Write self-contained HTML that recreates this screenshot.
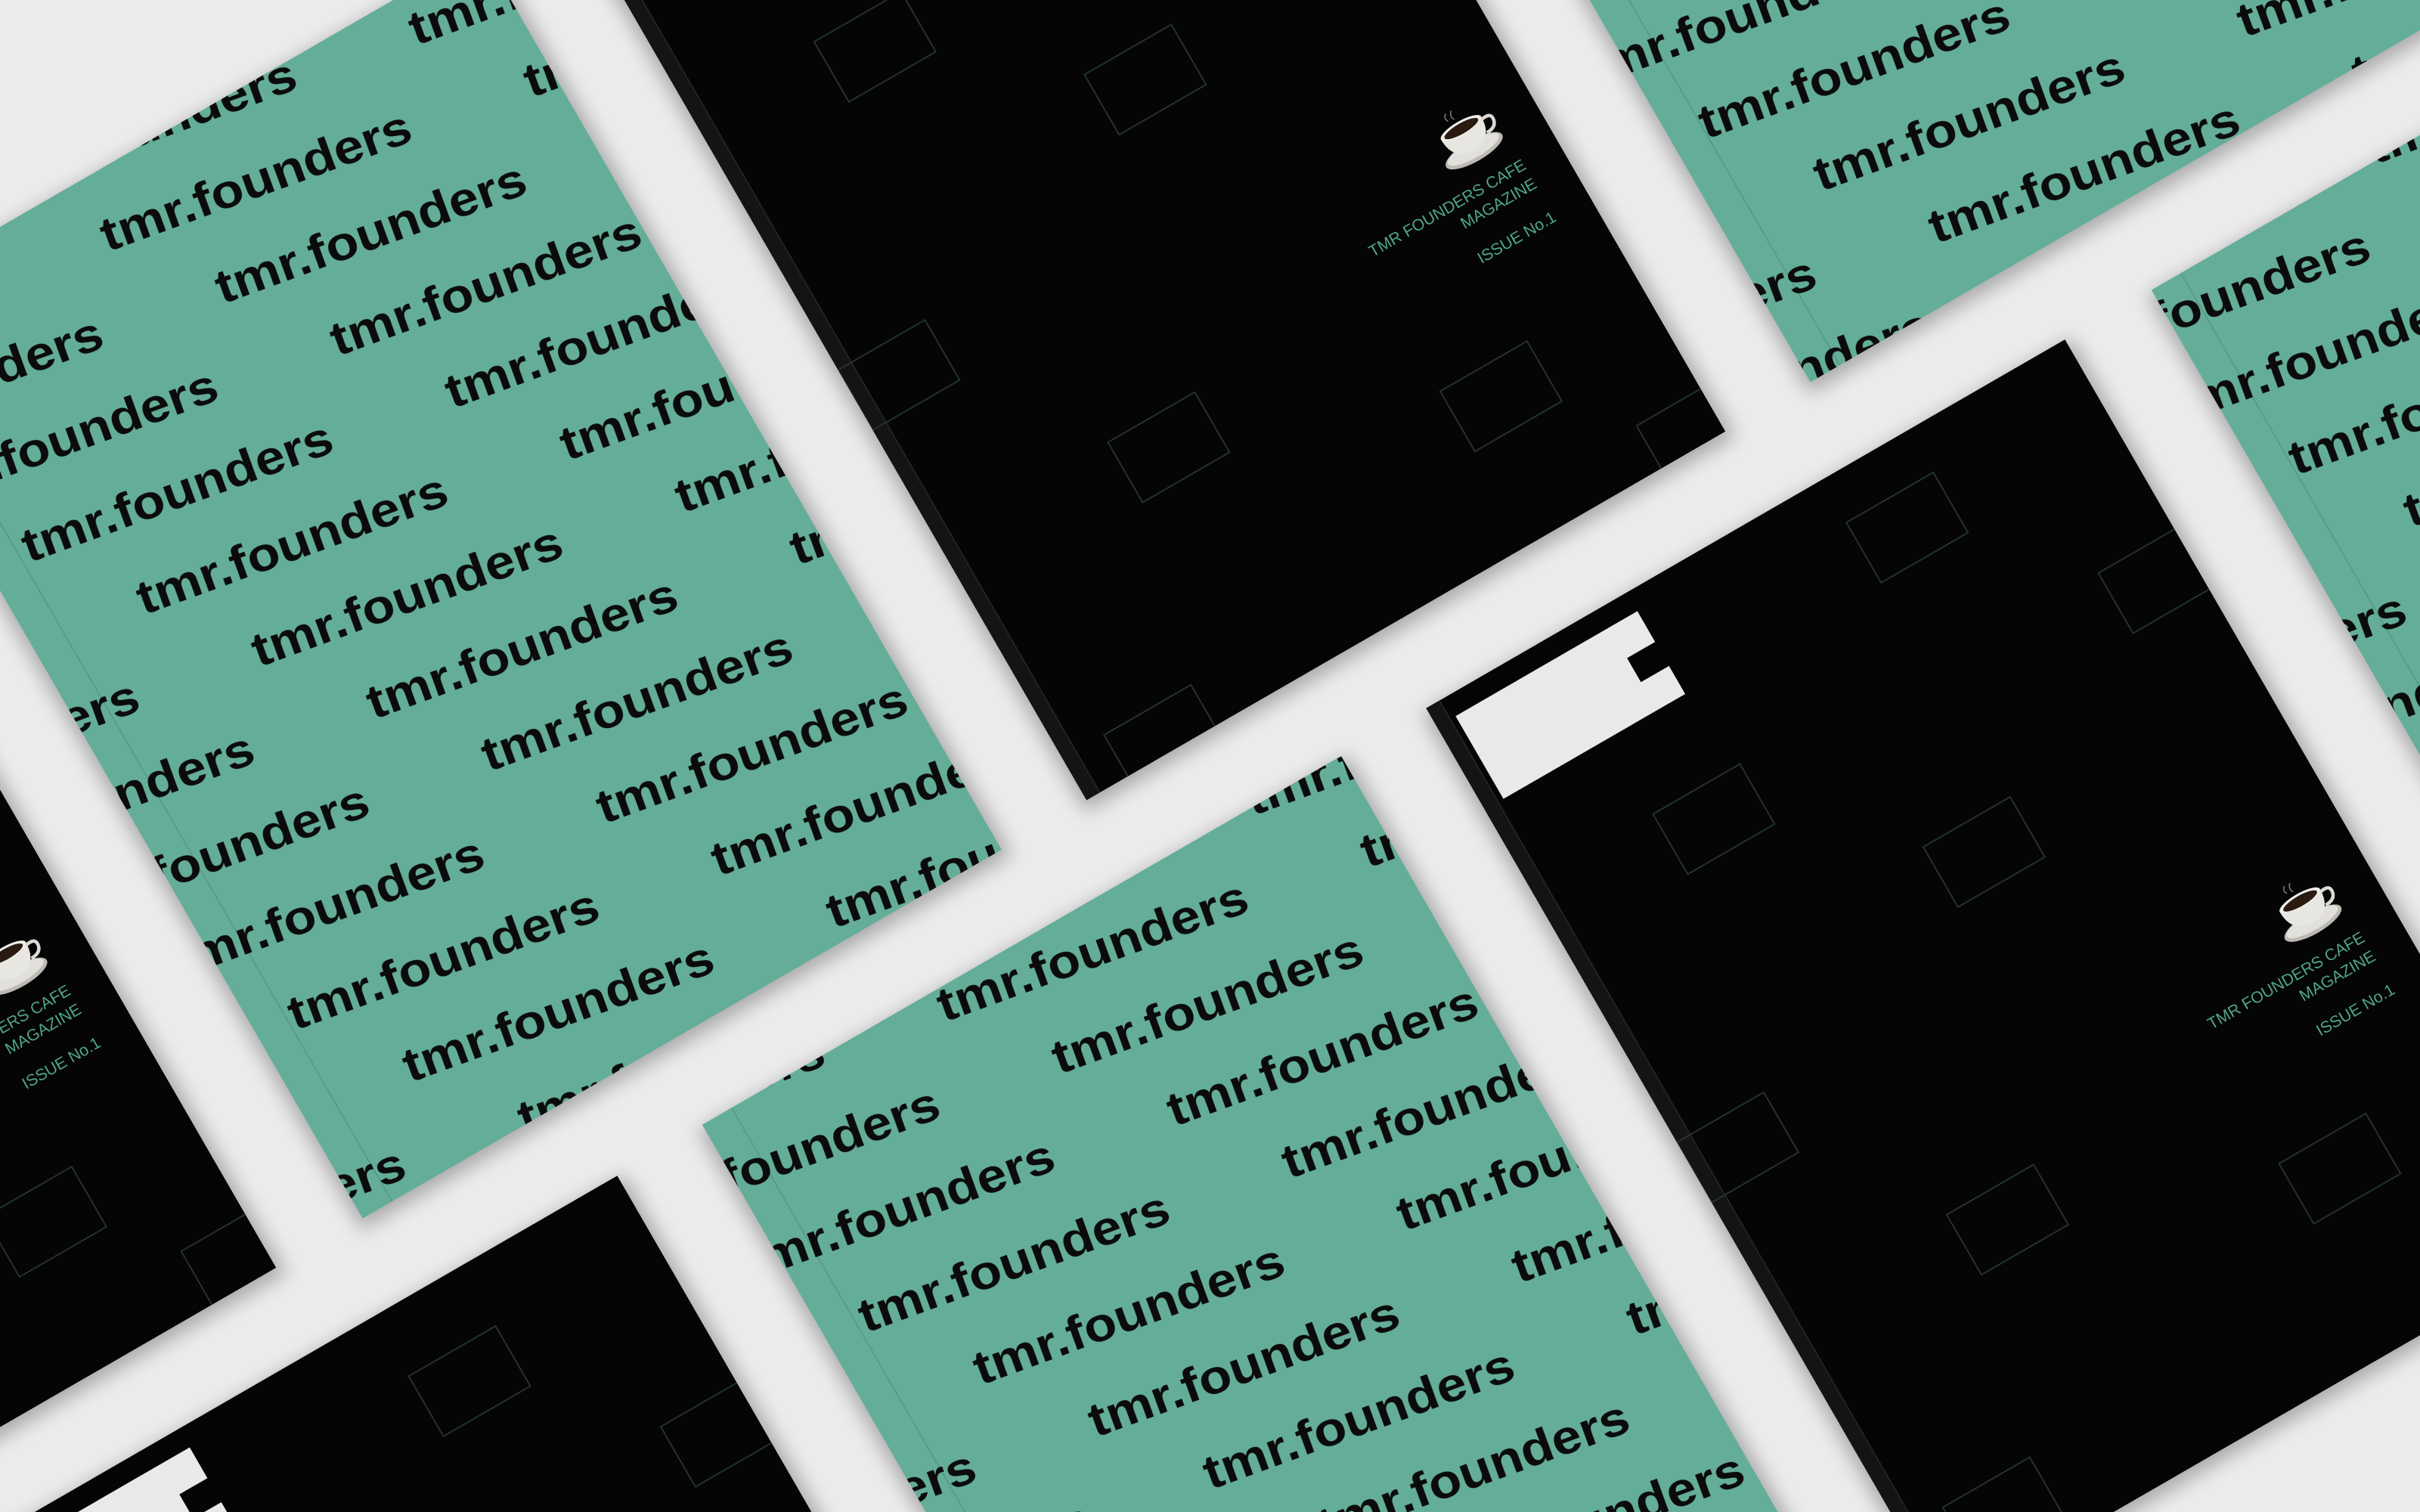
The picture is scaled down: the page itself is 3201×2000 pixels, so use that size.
<!DOCTYPE html>
<html><head><meta charset="utf-8"><style>
html,body{margin:0;padding:0;background:#ebebeb;overflow:hidden;width:3201px;height:2000px}
svg{display:block}
</style></head><body>
<svg width="3201" height="2000" viewBox="0 0 1568 980" preserveAspectRatio="none" xmlns="http://www.w3.org/2000/svg">
<defs>
<filter id="sh" x="-20%" y="-20%" width="140%" height="140%"><feGaussianBlur stdDeviation="6"/></filter>
<clipPath id="cc"><rect x="0" y="0" width="478" height="674"/></clipPath>
<g id="words" font-family="Liberation Sans, sans-serif" font-weight="bold" font-size="31" fill="#0b0b0b">
<text x="0" y="40" textLength="212" lengthAdjust="spacingAndGlyphs">tmr.founders</text>
<text x="-292" y="40" textLength="212" lengthAdjust="spacingAndGlyphs">tmr.founders</text>
<text x="58.4" y="97.3" textLength="212" lengthAdjust="spacingAndGlyphs">tmr.founders</text>
<text x="-233.6" y="97.3" textLength="212" lengthAdjust="spacingAndGlyphs">tmr.founders</text>
<text x="116.8" y="154.6" textLength="212" lengthAdjust="spacingAndGlyphs">tmr.founders</text>
<text x="-175.2" y="154.6" textLength="212" lengthAdjust="spacingAndGlyphs">tmr.founders</text>
<text x="175.2" y="211.9" textLength="212" lengthAdjust="spacingAndGlyphs">tmr.founders</text>
<text x="-116.8" y="211.9" textLength="212" lengthAdjust="spacingAndGlyphs">tmr.founders</text>
<text x="233.6" y="269.2" textLength="212" lengthAdjust="spacingAndGlyphs">tmr.founders</text>
<text x="-58.4" y="269.2" textLength="212" lengthAdjust="spacingAndGlyphs">tmr.founders</text>
</g>
<pattern id="p1" patternUnits="userSpaceOnUse" width="292" height="286.5" patternTransform="translate(170 49) rotate(10) translate(0 -40)"><use href="#words"/></pattern>
<pattern id="p2" patternUnits="userSpaceOnUse" width="292" height="286.5" patternTransform="translate(169 21) rotate(10) translate(0 -40)"><use href="#words"/></pattern>
<pattern id="p3" patternUnits="userSpaceOnUse" width="292" height="286.5" patternTransform="translate(20 504) rotate(10) translate(0 -40)"><use href="#words"/></pattern>
<pattern id="p4" patternUnits="userSpaceOnUse" width="292" height="286.5" patternTransform="translate(21 151) rotate(10) translate(0 -40)"><use href="#words"/></pattern>

<g id="sq" fill="none" stroke="#243630" stroke-width="0.9">
<rect x="93" y="160" width="65" height="45"/>
<rect x="234" y="266" width="65" height="45"/>
<rect x="0" y="352" width="65" height="45"/>
<rect x="128" y="480" width="65" height="45"/>
<rect x="331" y="559" width="65" height="45"/>
<rect x="31" y="643" width="65" height="45"/>
<rect x="430" y="642" width="65" height="45"/>
<rect x="296" y="59" width="65" height="45"/>
<rect x="421" y="169" width="65" height="45"/>
</g>
<g id="cup">
<ellipse cx="0" cy="11" rx="21" ry="7" fill="#bdbab4"/>
<ellipse cx="0" cy="10" rx="19" ry="5.5" fill="#e2e0db"/>
<path d="M-15 -6 Q-15 10 0 11 Q15 10 15 -6 Z" fill="#e8e6e1"/>
<path d="M14 -4 q8 -2 7 4 q-1 5 -8 5" fill="none" stroke="#dcdad4" stroke-width="2.2"/>
<ellipse cx="0" cy="-6" rx="15" ry="4.5" fill="#f0eee9"/>
<ellipse cx="0" cy="-5.6" rx="12.5" ry="3.4" fill="#2a1a12"/>
<path d="M-5 -14 q-2 -3 1 -5 M-1 -13 q-2 -3 1 -6" stroke="#777" stroke-width="0.8" fill="none"/>
</g>
<g id="blackc">
<rect width="478" height="674" fill="#050505"/>
<rect width="10" height="674" fill="#141414"/>
<line x1="10" y1="0" x2="10" y2="674" stroke="#262626" stroke-width="0.8"/>
<path d="M14 14 H150 V37 H129 V55 H150 V76 H14 Z" fill="#e9e9e9"/>
</g>
<g id="bcontent">
<use href="#sq"/>
<use href="#cup" transform="translate(428 424)"/>
<g font-family="Liberation Sans, sans-serif" font-size="10.5" fill="#4fa58b" text-anchor="end">
<text x="452" y="462">TMR FOUNDERS CAFE</text>
<text x="452" y="476">MAGAZINE</text>
<text x="452" y="501">ISSUE No.1</text>
</g>
</g>
<g id="shadow"><rect x="-4" y="2" width="486" height="678" fill="#000" opacity="0.28" filter="url(#sh)"/></g>
</defs>
<rect width="1568" height="980" fill="#ebebeb"/>

<use href="#shadow" transform="matrix(0.866 -0.5 0.5 0.866 -572 477)"/>
<use href="#shadow" transform="matrix(0.866 -0.5 0.5 0.866 -102 206)"/>
<use href="#shadow" transform="matrix(0.866 -0.5 0.5 0.866 367 -65)"/>
<use href="#shadow" transform="matrix(0.866 -0.5 0.5 0.866 836 -336)"/>
<use href="#shadow" transform="matrix(0.866 -0.5 0.5 0.866 -14 1001)"/>
<use href="#shadow" transform="matrix(0.866 -0.5 0.5 0.866 455 729)"/>
<use href="#shadow" transform="matrix(0.866 -0.5 0.5 0.866 924 459)"/>
<use href="#shadow" transform="matrix(0.866 -0.5 0.5 0.866 1394 188)"/>

<g transform="matrix(0.866 -0.5 0.5 0.866 -572 477)" clip-path="url(#cc)"><use href="#blackc"/><use href="#bcontent" transform="translate(0 -8)"/></g>
<g transform="matrix(0.866 -0.5 0.5 0.866 367 -65)" clip-path="url(#cc)"><use href="#blackc"/><use href="#bcontent"/></g>
<g transform="matrix(0.866 -0.5 0.5 0.866 -14 1001)" clip-path="url(#cc)"><use href="#blackc"/><use href="#bcontent" transform="translate(0 -14)"/></g>
<g transform="matrix(0.866 -0.5 0.5 0.866 924 459)" clip-path="url(#cc)"><use href="#blackc"/><use href="#bcontent" transform="translate(0 -27)"/></g>

<g transform="matrix(0.866 -0.5 0.5 0.866 -102 206)"><rect width="478" height="674" fill="#64ad99"/><rect width="478" height="674" fill="url(#p1)"/><line x1="22" y1="0" x2="22" y2="674" stroke="#000" stroke-opacity="0.12" stroke-width="0.8"/></g>
<g transform="matrix(0.866 -0.5 0.5 0.866 836 -336)"><rect width="478" height="674" fill="#64ad99"/><rect width="478" height="674" fill="url(#p3)"/><line x1="22" y1="0" x2="22" y2="674" stroke="#000" stroke-opacity="0.12" stroke-width="0.8"/></g>
<g transform="matrix(0.866 -0.5 0.5 0.866 455 729)"><rect width="478" height="674" fill="#64ad99"/><rect width="478" height="674" fill="url(#p2)"/><line x1="22" y1="0" x2="22" y2="674" stroke="#000" stroke-opacity="0.12" stroke-width="0.8"/></g>
<g transform="matrix(0.866 -0.5 0.5 0.866 1394 188)"><rect width="478" height="674" fill="#64ad99"/><rect width="478" height="674" fill="url(#p4)"/><line x1="22" y1="0" x2="22" y2="674" stroke="#000" stroke-opacity="0.12" stroke-width="0.8"/></g>
</svg>
</body></html>
